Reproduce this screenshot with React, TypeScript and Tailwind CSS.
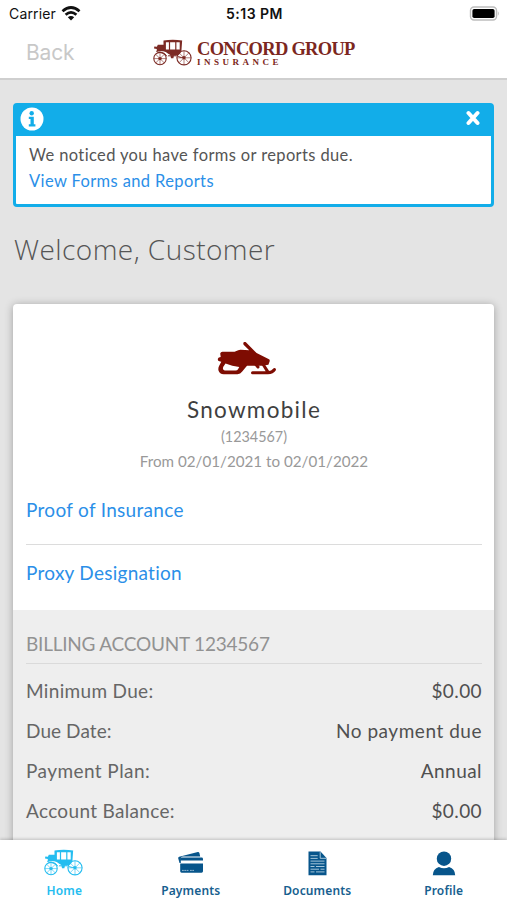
import type { ReactNode } from "react";

const billing = [
  { label: "Minimum Due:", value: "$0.00", labelClass: "tracking-[0.33px]", valueClass: "tracking-[0.4px]" },
  { label: "Due Date:", value: "No payment due", labelClass: "tracking-[0.08px]", valueClass: "tracking-[0.53px]" },
  { label: "Payment Plan:", value: "Annual", labelClass: "tracking-[0.43px]", valueClass: "tracking-[0.45px]" },
  { label: "Account Balance:", value: "$0.00", labelClass: "tracking-[0.32px]", valueClass: "tracking-[0.4px]" },
];

function Wheel({ cx, cy, r }: { cx: number; cy: number; r: number }) {
  const d = r * 0.71;
  return (
    <g>
      <circle cx={cx} cy={cy} r={r} fill="none" strokeWidth="1.1" />
      <path
        d={`M${cx - r} ${cy}h${2 * r}M${cx} ${cy - r}v${2 * r}M${cx - d} ${cy - d}l${2 * d} ${2 * d}M${cx - d} ${cy + d}l${2 * d} ${-2 * d}`}
        strokeWidth="0.6"
        fill="none"
      />
      <circle cx={cx} cy={cy} r="1.7" stroke="none" />
    </g>
  );
}

function Carriage({ className }: { className: string }) {
  return (
    <svg viewBox="0 0 40 28" fill="currentColor" stroke="currentColor" className={className}>
      <Wheel cx={7} cy={19.6} r={6.2} />
      <Wheel cx={31} cy={18.8} r={7.1} />
      <path d="M10.5 1.6Q19.8-.1 29.2 1.6l-.3 1.7H10.8z" stroke="none" />
      <path
        d="M10.5 2.5h2.4v8h13.8v-8h2.4l-.7 9.5q-1.4 4.2-5 4.6h-5.2l-3-1.8q-2.4-2.5-5-2.5H3.8V10L1 9.6l.3-2 2.6.1.9-1.9h5.7z"
        stroke="none"
      />
      <path d="M16.5 2.5v8.6M22.8 2.5v8.6" strokeWidth="1.2" fill="none" />
      <path d="M3.2 12.2q2 1.2 4 1.1 5.3.2 6.6 3.9M24 16q2.4 3.2 7 2.3M15 16.8h8.5" strokeWidth="1" fill="none" />
      <path d="M17.4 16.2h3.6l-.6 3h-2.4z" stroke="none" />
    </svg>
  );
}

function Snowmobile() {
  return (
    <svg viewBox="0 0 60 36" className="mr-[14px] h-9 w-15 text-[#7e0c02]" fill="currentColor">
      <path d="M3.2 11.6q.5-1.8 2.2-1.8h12.2l3.6-1.6q1.2-.5 2.6-.4l8.4.5-5.6-5.6q-.9-1.8.6-2.6 1.1-.6 2.2.6l10.2 10.4 12.4 6.2q1 .6.7 2l-1.3 3.4-6.1 1.1H30L25 29.8q-1.5 2.4-4.5 2.4H6.7q-4.2-.2-5.2-3.8-.6-2.5.8-5l2-3.6-1.9-.5q-1.9-.7-1.5-2.5.3-1.5 1.8-1.6l1-.2zM8.5 21.4l-2.2 3.4q-1.2 3 1.4 3.6h10.6q2 .1 2.7-1.2l1.3-2.3-7-1.2z" />
      <path
        d="M35.5 30.8h15.3q4.8-.3 6.6-3.2M46.5 23l4.2 6.6M38.5 22l2.5 3"
        fill="none"
        stroke="currentColor"
        strokeWidth="3"
        strokeLinecap="round"
      />
    </svg>
  );
}

function CardsIcon() {
  return (
    <svg viewBox="0 0 26 22" className="h-[22px] w-[26px]" fill="#07558b">
      <path d="M.2 6.2Q.1 5 1.2 4.7L19.8.1q1.2-.2 1.6 1l.8 3.4H4.8q-2 0-2 1.7v4.7H1.5z" />
      <path d="M2.2 7q0-1.4 1.4-1.4h20q1.4 0 1.4 1.4v1.4H2.2zM2.2 11.6H25v7.7q0 1.4-1.4 1.4h-20q-1.4 0-1.4-1.4z" />
      <path d="M4 18.4h7M12 18.4h4" stroke="#9fc1d8" strokeWidth="0.9" strokeDasharray="1.8 0.5" />
    </svg>
  );
}

function DocumentIcon() {
  return (
    <svg viewBox="0 0 19 25" className="h-[25px] w-[19px]">
      <path d="M.5.5h12l6 6.5v17.3H.5z" fill="#07558b" />
      <path d="M12.2 1.2v6.1h6" fill="none" stroke="#b9d2e2" strokeWidth="0.9" />
      <path
        d="M2.5 4.7h7.2M2.5 7.4h7.2M2.5 10.1h14M2.5 12.8h14M2.5 15.5h4M8 15.5h8.5M2.5 18.2h8.5M12.5 18.2h4M2.5 20.9h4M8 20.9h8.5"
        stroke="#a5c5d9"
        strokeWidth="1"
      />
    </svg>
  );
}

function ProfileIcon() {
  return (
    <svg viewBox="0 0 24 25" className="h-[25px] w-6" fill="#07558b">
      <circle cx="12" cy="7.7" r="7.2" />
      <path d="M.8 24.3q.1-6.4 6.1-8.3 5.1 2.7 10.2 0 6 1.9 6.1 8.3z" />
    </svg>
  );
}

function Tab({ icon, label, active = false }: { icon: ReactNode; label: string; active?: boolean }) {
  return (
    <div className="flex flex-col items-center pt-2">
      <div className="flex h-[30px] items-center justify-center">{icon}</div>
      <span
        className={`mt-[5px] font-['Noto_Sans',sans-serif] text-[12px] leading-4 font-semibold tracking-[0.15px] ${
          active ? "text-[#25bdf0]" : "text-[#17608f]"
        }`}
      >
        {label}
      </span>
    </div>
  );
}

export default function App() {
  return (
    <div className="flex h-[900px] w-[507px] flex-col overflow-hidden bg-[#e4e4e4] font-['Lato',sans-serif]">
      <header className="h-20 shrink-0 border-b-2 border-[#cfcfcf] bg-white">
        <div className="grid h-7 grid-cols-3 items-center pr-[7px] pb-px pl-[9px] font-['Inter',sans-serif] text-[#111]">
          <div className="flex items-center gap-[5px] text-[14px] tracking-[0.15px]">
            <span>Carrier</span>
            <svg viewBox="0 0 20 15" className="mb-px h-[15px] w-5">
              <path d="M1.5 5.2Q10-2.2 18.5 5.2M4.6 8.7q5.4-4.6 10.8 0" fill="none" stroke="#111" strokeWidth="2.8" />
              <path d="M6.8 11.2q3.2-2.4 6.4 0L10 14.6z" fill="#111" />
            </svg>
          </div>
          <span className="text-center text-[14px] font-semibold tracking-[0.5px]">5:13 PM</span>
          <svg viewBox="0 0 31 15" className="mb-px h-[15px] w-[31px] justify-self-end">
            <rect x="1.5" y="1" width="26" height="13" rx="3.5" fill="white" stroke="#bdbdbd" strokeWidth="1.4" />
            <rect x="3.4" y="2.9" width="22.2" height="9.2" rx="1.8" fill="#000" />
            <path d="M28.8 5q2 2.5 0 5z" fill="#bdbdbd" />
          </svg>
        </div>
        <div className="flex h-[50px] items-center pl-[26px]">
          <span className="w-[127px] font-['Inter',sans-serif] text-[21px] tracking-[-0.2px] text-[#c8c8c8]">Back</span>
          <Carriage className="h-7 w-10 text-[#7c2b25]" />
          <div className="ml-1 font-['Liberation_Serif',serif] text-[#7c2720]">
            <div className="text-[18.5px] leading-[18px] font-bold tracking-[-0.72px] whitespace-nowrap">CONCORD GROUP</div>
            <div className="text-[9px] leading-[9px] font-bold tracking-[3.5px]">INSURANCE</div>
          </div>
        </div>
      </header>

      <main className="min-h-0 flex-1 overflow-hidden px-[13px] pt-[23px]">
        <section className="h-[104px] rounded-[4px] border-[3px] border-[#12ade9] bg-white">
          <div className="flex h-[30px] items-start justify-between bg-[#12ade9] pt-px pr-[11px] pl-1">
            <svg viewBox="0 0 24 24" className="h-6 w-6">
              <circle cx="12" cy="12" r="11.5" fill="white" />
              <circle cx="11.7" cy="6.2" r="2.2" fill="#12ade9" />
              <path d="M8.8 9.7h5v7.6h1.6v2.2H8.8v-2.2h1.7v-5.4H8.8z" fill="#12ade9" />
            </svg>
            <svg viewBox="0 0 14 16" className="mt-[3px] h-4 w-[14px]">
              <path d="M2.5 3l9 10M11.5 3l-9 10" stroke="white" strokeWidth="4" strokeLinecap="round" />
            </svg>
          </div>
          <div className="px-[13px] pt-[6px] text-[16.5px] leading-[26px]">
            <p className="tracking-[0.37px] text-[#555]">We noticed you have forms or reports due.</p>
            <a className="tracking-[0.38px] text-[#2b8fe8]">View Forms and Reports</a>
          </div>
        </section>

        <h1 className="mt-[22px] h-10 pl-px font-['Open_Sans',sans-serif] text-[28px] leading-10 font-light tracking-[0.45px] text-[#555]">
          Welcome, Customer
        </h1>

        <section className="mt-[35px] h-[600px] rounded-[4px] bg-white shadow-[0_1px_8px_rgba(0,0,0,0.3)]">
          <div className="flex h-[306px] flex-col pt-[38px] pr-3 pl-[13px]">
            <div className="flex flex-col items-center">
              <Snowmobile />
              <h2 className="mt-[18px] text-[22.5px] leading-7 tracking-[1.3px] text-[#3f3f3f]">Snowmobile</h2>
              <p className="text-[14.4px] leading-[26px] text-[#999]">(1234567)</p>
              <p className="text-[15.2px] leading-[23px] text-[#999]">From 02/01/2021 to 02/01/2022</p>
            </div>
            <div className="mt-1 flex h-[68px] items-center border-b border-[#dcdcdc] text-[19px] tracking-[0.3px] text-[#2b8fe8]">
              <a>Proof of Insurance</a>
            </div>
            <div className="flex h-[56px] items-center text-[19px] tracking-[0.26px] text-[#2b8fe8]">
              <a>Proxy Designation</a>
            </div>
          </div>
          <div className="h-[300px] bg-[#eeeeee] pt-5 pr-3 pl-[13px]">
            <h3 className="h-[34px] border-b border-[#dadada] text-[19px] leading-7 tracking-[-0.22px] text-[#929292]">
              BILLING ACCOUNT 1234567
            </h3>
            <div className="pt-[7px] text-[19px] leading-10">
              {billing.map((row) => (
                <div key={row.label} className="flex justify-between">
                  <span className={`text-[#666] ${row.labelClass}`}>{row.label}</span>
                  <span className={`text-[#505050] ${row.valueClass}`}>{row.value}</span>
                </div>
              ))}
            </div>
          </div>
        </section>
      </main>

      <nav className="relative grid h-[60px] shrink-0 grid-cols-4 bg-white pl-px shadow-[0_-1px_3px_rgba(0,0,0,0.2)]">
        <Tab icon={<Carriage className="h-7 w-10 text-[#25bdf0]" />} label="Home" active />
        <Tab icon={<CardsIcon />} label="Payments" />
        <Tab icon={<DocumentIcon />} label="Documents" />
        <Tab icon={<ProfileIcon />} label="Profile" />
      </nav>
    </div>
  );
}
